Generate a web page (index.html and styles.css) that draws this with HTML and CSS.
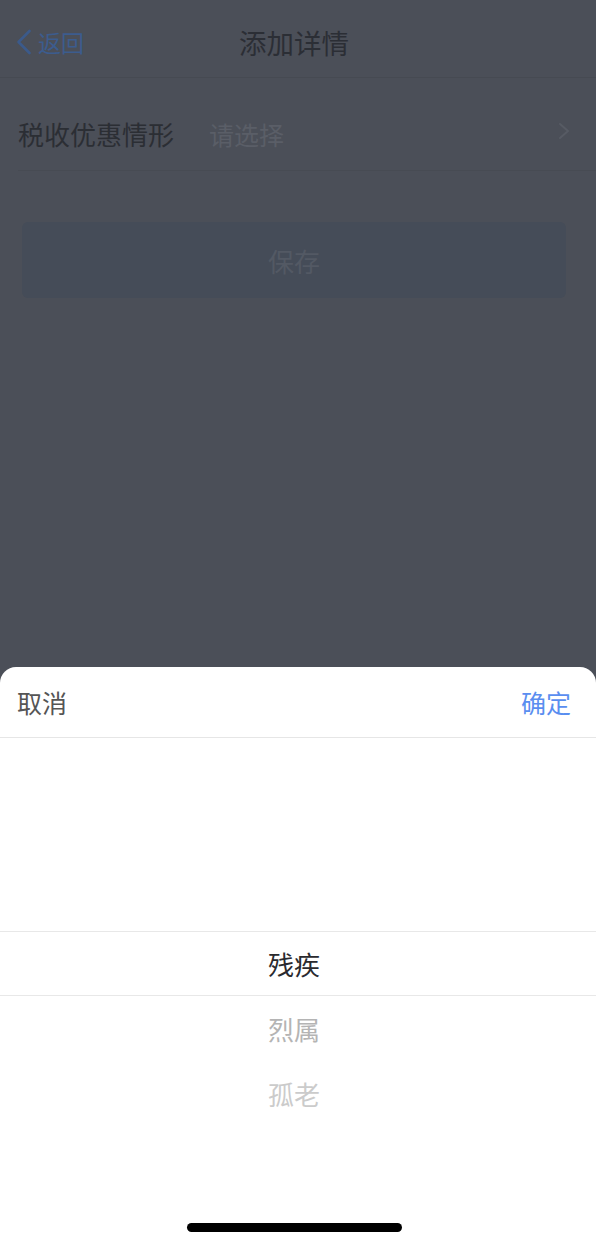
FILE: index.html
```html
<!DOCTYPE html>
<html lang="zh">
<head>
<meta charset="utf-8">
<title>添加详情</title>
<link rel="stylesheet" href="styles.css">
</head>
<body>
<div class="page">
  <header class="nav">
    <div class="back">
      <svg class="back-icon" width="16" height="26" viewBox="0 0 16 26"><polyline points="13.5,2 2.5,13 13.5,24" fill="none" stroke="#3b5a8b" stroke-width="2.6" stroke-linecap="round" stroke-linejoin="round"/></svg>
      <span>返回</span>
    </div>
    <div class="title">添加详情</div>
  </header>
  <div class="row">
    <span class="label">税收优惠情形</span>
    <span class="placeholder">请选择</span>
    <svg class="arrow" width="12" height="18" viewBox="0 0 12 18"><polyline points="2,2 10,9 2,16" fill="none" stroke="#575b64" stroke-width="2" stroke-linecap="round" stroke-linejoin="round"/></svg>
  </div>
  <div class="btn-wrap">
    <div class="save">保存</div>
  </div>

  <div class="sheet">
    <div class="sheet-head">
      <span class="cancel">取消</span>
      <span class="ok">确定</span>
    </div>
    <div class="picker">
      <div class="band"></div>
      <div class="item sel">残疾</div>
      <div class="item near">烈属</div>
      <div class="item far">孤老</div>
    </div>
    <div class="home"><div class="bar"></div></div>
  </div>
</div>
</body>
</html>
```
FILE: styles.css
```css
html, body {
  margin: 0;
  padding: 0;
}
body {
  font-family: "Noto Sans CJK SC", "Noto Sans", sans-serif;
  background: #4b4f58;
}
.page {
  position: relative;
  width: 596px;
  height: 1240px;
  overflow: hidden;
  background: #4b4f58;
}
.nav {
  height: 77px;
  border-bottom: 1px solid #464a52;
  display: flex;
  align-items: center;
  justify-content: center;
  position: relative;
  padding-right: 8px;
}
.back {
  position: absolute;
  left: 16px;
  top: 28px;
  display: flex;
  align-items: center;
  gap: 6px;
  color: #3c5c8e;
  font-size: 23px;
  line-height: 28px;
}
.back-icon {
  display: block;
}
.title {
  font-size: 27.5px;
  color: #2b2e35;
  line-height: 34px;
  margin-top: 6px;
}
.row {
  margin-top: 20px;
  height: 72px;
  margin-left: 18px;
  border-bottom: 1px solid #474b53;
  display: flex;
  align-items: center;
  padding-right: 26px;
}
.label {
  font-size: 26px;
  color: #2b2e34;
  width: 193px;
  margin-top: -1px;
}
.placeholder {
  font-size: 25px;
  color: #5a5e67;
  flex: 1;
  margin-top: -1px;
  margin-left: -2px;
}
.arrow {
  display: block;
  margin-top: -7px;
}
.btn-wrap {
  padding: 51px 30px 0 22px;
}
.save {
  height: 76px;
  border-radius: 6px;
  background: #454c58;
  color: #535964;
  font-size: 26px;
  display: flex;
  align-items: center;
  justify-content: center;
}
.sheet {
  position: absolute;
  left: 0;
  right: 0;
  bottom: 0;
  height: 573px;
  background: #fff;
  border-radius: 16px 16px 0 0;
  display: flex;
  flex-direction: column;
}
.sheet-head {
  height: 70px;
  border-bottom: 1px solid #e6e6e6;
  display: flex;
  align-items: center;
  justify-content: space-between;
  padding: 0 25px 0 17px;
  font-size: 25px;
}
.cancel {
  color: #555;
}
.ok {
  color: #5a8ef0;
}
.picker {
  position: relative;
  padding-top: 193px;
  height: 255px;
  background: #fff;
}
.band {
  position: absolute;
  left: 0;
  right: 0;
  top: 193px;
  height: 63px;
  border-top: 1px solid #e8e8e8;
  border-bottom: 1px solid #e8e8e8;
}
.item {
  height: 65px;
  display: flex;
  align-items: center;
  justify-content: center;
  font-size: 26px;
  padding-right: 8px;
}
.sel {
  color: #2a2a2e;
}
.near {
  color: #b4b4b4;
}
.far {
  color: #cbcbcb;
}
.home {
  flex: 1;
  display: flex;
  align-items: flex-end;
  justify-content: center;
  padding-bottom: 8px;
  padding-right: 7px;
}
.bar {
  width: 215px;
  height: 9px;
  border-radius: 5px;
  background: #000;
}
```
